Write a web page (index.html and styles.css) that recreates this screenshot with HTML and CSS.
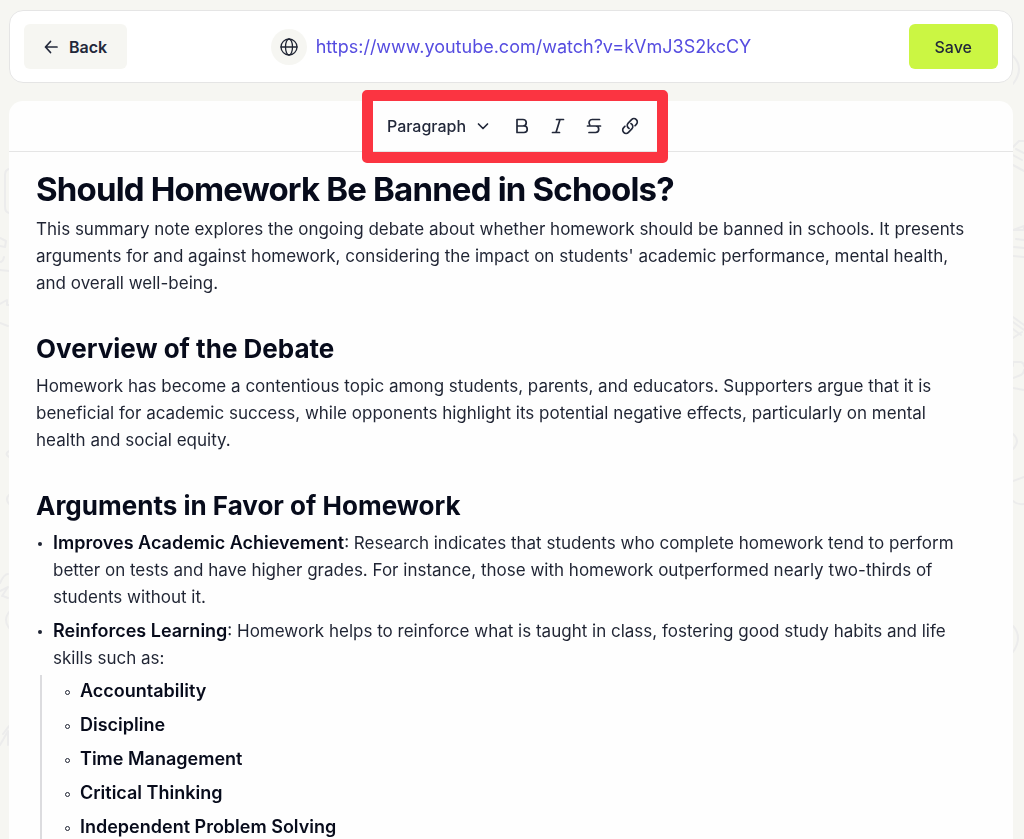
FILE: index.html
```html
<!DOCTYPE html>
<html lang="en">
<head>
    <meta charset="UTF-8">
    <meta name="viewport" content="width=device-width, initial-scale=1.0">
    <title>Edit note</title>
    <link rel="stylesheet" href="styles.css">
</head>
<body>
    <!-- Background doodles -->
    <svg class="doodle doodle-left" viewBox="0 0 9 839" aria-hidden="true">
        <path d="M9 169q-4 1-4 6v32q0 5 4 6M0 238l6 3-1 6-5-1M0 262q3 0 4-5M0 270l9 1M0 304l7-4v5h2M0 323l8 3M9 451q-5 3 0 6M9 495q-4 4 0 9M0 583q4-9 8-9M0 591l8-4-6 9M3 596l5 2M9 612q-6 8 0 16M9 726l-6 8M0 745l8-14v14"/>
    </svg>
    <svg class="doodle doodle-right" viewBox="0 0 11 839" aria-hidden="true">
        <path d="M0 56q12 12 0 28M0 147l6-6h5M3 149l8 4M0 155l9 5M0 165l11 6M0 230l11-4v4H0M3 239l8 1M1 247l10 1M0 256l11 1M0 317l11 8M0 322l11 8M0 329l8 6M0 338l9-6M0 366v-4h8q3 1 3 4M0 378l8-3q3-2 3-5M0 388l11 2M0 434q8 7 0 15M0 481l11-4M0 501q4 4 11 3M0 626q10 11 0 26"/>
    </svg>

    <div class="page">
        <header class="topbar">
            <button type="button" class="btn btn-back">
                <svg class="icon-arrow" viewBox="0 0 14 14" aria-hidden="true">
                    <path d="M13 7H1.500M6.500 1.500L1.500 7l5 5.500"/>
                </svg>
                Back
            </button>
            <div class="source">
                <span class="source-icon">
                    <svg viewBox="0 0 18 18" aria-hidden="true">
                        <circle cx="9" cy="9" r="8"/>
                        <ellipse cx="9" cy="9" rx="3.500" ry="8"/>
                        <path d="M1 9h16"/>
                    </svg>
                </span>
                <a href="https://www.youtube.com/watch?v=kVmJ3S2kcCY">https://www.youtube.com/watch?v=kVmJ3S2kcCY</a>
            </div>
            <button type="button" class="btn btn-save">Save</button>
        </header>

        <main class="editor">
            <div class="toolbar">
                <div class="tools" role="toolbar" aria-label="Formatting">
                    <button type="button" class="tool-block">
                        Paragraph
                        <svg class="icon-chevron" viewBox="0 0 12 12" aria-hidden="true"><path d="M1.500 4L6 8.500 10.500 4"/></svg>
                    </button>
                    <button type="button" class="tool" aria-label="Bold">
                        <svg viewBox="0 0 18 18" aria-hidden="true"><path d="M4 2.500h6a3.200 3.200 0 0 1 0 6.500H4zM4 9h7a3.200 3.200 0 0 1 0 6.500H4z"/></svg>
                    </button>
                    <button type="button" class="tool" aria-label="Italic">
                        <svg viewBox="0 0 18 18" aria-hidden="true"><path d="M7.500 2.500h7M3.500 15.500h7M11 2.500l-4 13"/></svg>
                    </button>
                    <button type="button" class="tool" aria-label="Strikethrough">
                        <svg viewBox="0 0 18 18" aria-hidden="true"><path d="M14.500 2.500H7.200a3.200 3.200 0 0 0-2.500 5.200M2.500 9h13M10.500 9a3.200 3.200 0 0 1 0 6.500H4"/></svg>
                    </button>
                    <button type="button" class="tool" aria-label="Link">
                        <svg viewBox="0 0 24 24" class="icon-link" aria-hidden="true"><path d="M13.190 8.688a4.500 4.500 0 0 1 1.242 7.244l-4.500 4.500a4.500 4.500 0 0 1-6.364-6.364l1.757-1.757m13.350-.622 1.757-1.757a4.500 4.500 0 0 0-6.364-6.364l-4.500 4.500a4.500 4.500 0 0 0 1.242 7.244"/></svg>
                    </button>
                </div>
                <div class="highlight"></div>
            </div>

            <article class="note">
                <h1>Should Homework Be Banned in Schools?</h1>
                <p>This summary note explores the ongoing debate about whether homework should be banned in schools. It presents arguments for and against homework, considering the impact on students' academic performance, mental health, and overall well-being.</p>

                <h2>Overview of the Debate</h2>
                <p>Homework has become a contentious topic among students, parents, and educators. Supporters argue that it is beneficial for academic success, while opponents highlight its potential negative effects, particularly on mental health and social equity.</p>

                <h2>Arguments in Favor of Homework</h2>
                <ul>
                    <li><strong>Improves Academic Achievement</strong>: Research indicates that students who complete homework tend to perform better on tests and have higher grades. For instance, those with homework outperformed nearly two-thirds of students without it.</li>
                    <li><strong>Reinforces Learning</strong>: Homework helps to reinforce what is taught in class, fostering good study habits and life skills such as:
                        <ul>
                            <li><strong>Accountability</strong></li>
                            <li><strong>Discipline</strong></li>
                            <li><strong>Time Management</strong></li>
                            <li><strong>Critical Thinking</strong></li>
                            <li><strong>Independent Problem Solving</strong></li>
                        </ul>
                    </li>
                </ul>
            </article>
        </main>
    </div>
</body>
</html>
```

FILE: styles.css
```css
* {
    box-sizing: border-box;
}
html {
    height: 100%;
}
body {
    height: 100%;
    margin: 0;
    overflow: hidden;
    background: #f6f6f2;
    color: #1f2433;
    font-family: Inter, sans-serif;
    font-size: 17px;
    line-height: 27px;
}
button {
    font-family: inherit;
    font-size: 16px;
    font-weight: 500;
    color: #22283a;
    border: none;
    background: none;
    cursor: pointer;
}
svg {
    display: block;
    fill: none;
    stroke: currentColor;
    stroke-width: 1.7;
    stroke-linecap: round;
    stroke-linejoin: round;
}

/* Background doodles */
.doodle {
    position: fixed;
    top: 0;
    height: 839px;
    color: #ececec;
    stroke-width: 2;
}
.doodle-left {
    left: 0;
    width: 9px;
}
.doodle-right {
    right: 0;
    width: 11px;
}

.page {
    position: relative;
    display: flex;
    flex-direction: column;
    gap: 18px;
    height: 100%;
    padding: 10px 11px 0 9px;
}

/* Top bar */
.topbar {
    display: grid;
    grid-template-columns: 1fr auto 1fr;
    align-items: center;
    flex-shrink: 0;
    padding: 13px 14px;
    background: #fff;
    border: 1px solid #e5e5e5;
    border-radius: 14px;
}
.btn {
    display: flex;
    align-items: center;
    justify-content: center;
    height: 45px;
    border-radius: 6px;
}
.btn-back {
    justify-self: start;
    gap: 11px;
    padding: 0 20px;
    background: #f6f6f2;
    font-weight: 600;
}
.btn-save {
    justify-self: end;
    padding: 0 26px;
    background: #cbf643;
}
.icon-arrow {
    width: 14px;
    height: 14px;
}
.source {
    display: flex;
    align-items: center;
    gap: 9px;
}
.source-icon {
    display: flex;
    align-items: center;
    justify-content: center;
    width: 36px;
    height: 36px;
    background: #f6f6f2;
    border-radius: 50%;
}
.source-icon svg {
    width: 18px;
    height: 18px;
    stroke-width: 1.3;
}
.source a {
    color: #554ce0;
    font-size: 18px;
    text-decoration: none;
}

/* Editor */
.editor {
    flex: 1;
    background: #fefefe;
    border-radius: 14px 14px 0 0;
}
.toolbar {
    position: relative;
    display: flex;
    align-items: center;
    justify-content: center;
    height: 51px;
    padding-left: 4px;
    border-bottom: 1px solid #e5e5e5;
}
.tools {
    display: flex;
    align-items: center;
    gap: 18px;
}
.tools button {
    display: flex;
    align-items: center;
    padding: 0;
}
.tools .tool-block {
    gap: 11px;
    margin-right: 6px;
}
.tool svg {
    width: 18px;
    height: 18px;
}
.tool .icon-link {
    stroke-width: 2.2;
}
.icon-chevron {
    width: 12px;
    height: 12px;
}
/* Red frame around the formatting tools */
.highlight {
    position: absolute;
    top: -11px;
    left: calc(50% + 4px);
    width: 306px;
    height: 73px;
    transform: translateX(-50%);
    border: 11px solid #fb3441;
    border-radius: 5px;
    pointer-events: none;
}

/* Note */
.note {
    padding: 17px 36px 18px 27px;
}
.note h1,
.note h2 {
    color: #070b1b;
    font-weight: 700;
}
.note h1 {
    margin: 0 0 7px;
    font-size: 33px;
    line-height: 40px;
    letter-spacing: -0.025em;
}
.note h2 {
    margin: 34px 0 6px;
    font-size: 26px;
    line-height: 36px;
}
.note p {
    margin: 0;
}
.note strong {
    color: #070b1b;
    font-size: 18px;
    font-weight: 600;
    line-height: 18px;
}
.note ul {
    margin: 0;
    padding-left: 17px;
    list-style: none;
}
.note li {
    position: relative;
    margin-bottom: 7px;
}
.note li::before {
    content: '';
    position: absolute;
    top: 12px;
    left: -15px;
    width: 4px;
    height: 4px;
    background: #1f2433;
    border-radius: 50%;
}
.note ul ul {
    margin: 3px 0 0 -13px;
    padding: 3px 0 0 38px;
    border-left: 2px solid #dcdcdf;
}
.note ul ul li::before {
    width: 3px;
    height: 3px;
    background: none;
    border: 1px solid #1f2433;
}
```
